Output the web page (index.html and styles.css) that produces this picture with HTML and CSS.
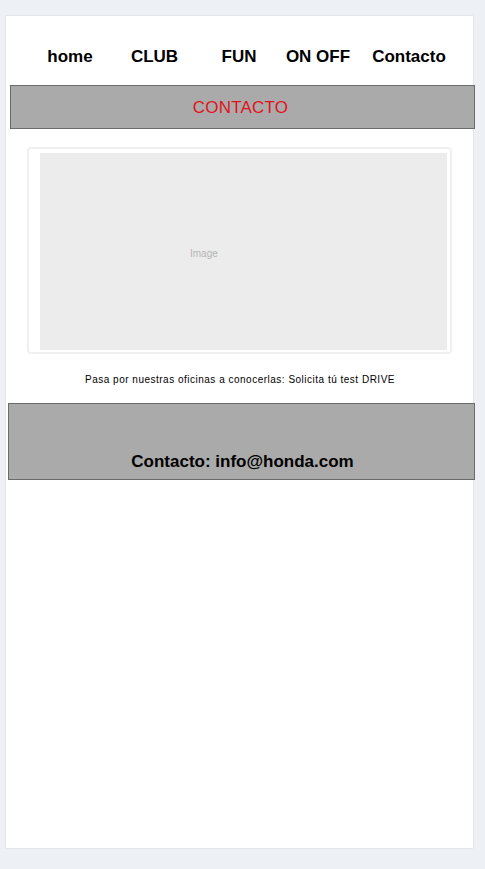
FILE: index.html
```html
<!DOCTYPE html>
<html lang="es">
<head>
<meta charset="utf-8">
<title>Contacto</title>
<link rel="stylesheet" href="styles.css">
</head>
<body>
<div class="page">
  <nav class="nav">
    <a class="nav-item" href="#">home</a>
    <a class="nav-item" href="#">CLUB</a>
    <a class="nav-item" href="#">FUN</a>
    <a class="nav-item" href="#">ON OFF</a>
    <a class="nav-item" href="#">Contacto</a>
  </nav>
  <div class="title-bar">CONTACTO</div>
  <div class="image-card">
    <div class="image-box"><span class="image-label">Image</span></div>
  </div>
  <p class="caption">Pasa por nuestras oficinas a conocerlas: Solicita tú test DRIVE</p>
  <div class="footer-bar">Contacto: info@honda.com</div>
</div>
</body>
</html>
```
FILE: styles.css
```css
html, body {
  margin: 0;
  padding: 0;
  background: #edf1f5;
  font-family: "Liberation Sans", Arial, sans-serif;
}
.page {
  box-sizing: border-box;
  width: 469px;
  height: 834px;
  margin: 15px 0 0 5px;
  background: #fff;
  border: 1px solid #e2e6ea;
  border-radius: 2px;
}
.nav {
  display: grid;
  grid-template-columns: 84px 85px 84px 74px 108px;
  padding: 31px 0 18px 22px;
}
.nav-item {
  color: #000;
  text-decoration: none;
  font-weight: bold;
  font-size: 17px;
  line-height: 20px;
  text-align: center;
}
.title-bar {
  box-sizing: border-box;
  width: 465px;
  height: 44px;
  margin-left: 4px;
  background: #aaaaaa;
  border: 1px solid #6b6b6b;
  color: #e0141c;
  font-size: 17px;
  letter-spacing: 0.2px;
  padding: 1px 4px 0 0;
  line-height: 41px;
  text-align: center;
}
.image-card {
  box-sizing: border-box;
  width: 425px;
  height: 207px;
  margin: 18px 0 0 21px;
  border: 2px solid #f0f0f0;
  border-radius: 4px;
  padding: 4px 3px 2px 11px;
}
.image-box {
  height: 100%;
  background: #ececec;
  display: flex;
  align-items: center;
  padding-left: 150px;
  padding-top: 3px;
  box-sizing: border-box;
}
.image-label {
  color: #b5b5b5;
  font-size: 10px;
}
.caption {
  margin: 20px 0 0;
  font-size: 10px;
  line-height: 12px;
  letter-spacing: 0.5px;
  text-align: center;
  color: #000;
  padding-left: 1px;
}
.footer-bar {
  box-sizing: border-box;
  width: 467px;
  height: 77px;
  margin: 17px 0 0 2px;
  background: #aaaaaa;
  border: 1px solid #6b6b6b;
  padding: 48px 0 0 2px;
  font-weight: bold;
  font-size: 17px;
  line-height: 20px;
  text-align: center;
  color: #000;
}
```
